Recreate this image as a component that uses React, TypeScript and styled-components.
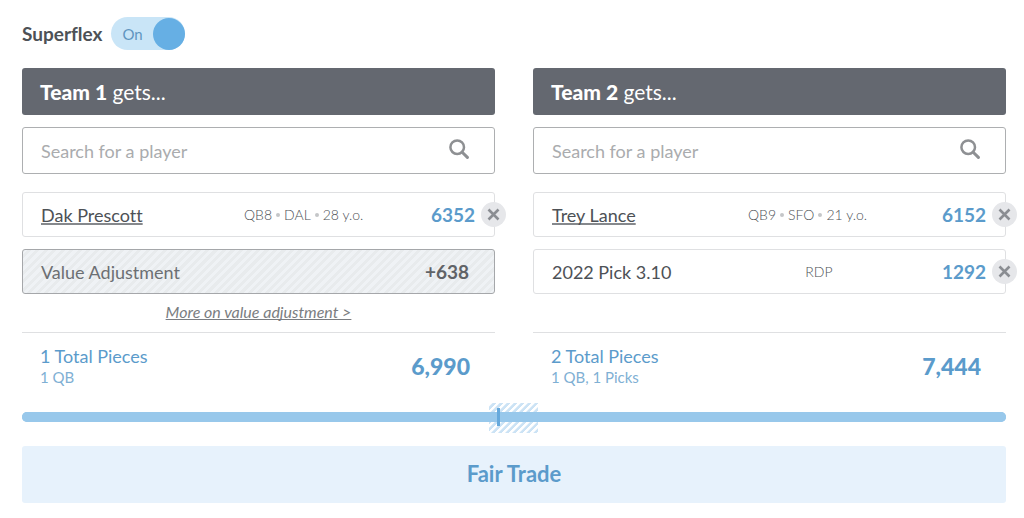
import React, { useState } from "react";
import styled, { createGlobalStyle, css } from "styled-components";

const GlobalStyle = createGlobalStyle`
  *, *::before, *::after { box-sizing: border-box; }
  body {
    margin: 0;
    background: #fff;
    color: #4d5156;
    font-family: Lato, "Open Sans", sans-serif;
    font-size: 18px;
    line-height: 24px;
    font-variant-ligatures: none;
  }
  button, input { font: inherit; color: inherit; }
`;

const Page = styled.main`
  padding: 17px 18px 16px 22px;
`;

const SwitchLabel = styled.label`
  display: inline-flex;
  align-items: center;
  gap: 9px;
  font-size: 19px;
  font-weight: 700;
  cursor: pointer;
`;

const Track = styled.span<{ $on: boolean }>`
  position: relative;
  display: flex;
  align-items: center;
  justify-content: ${(p) => (p.$on ? "space-between" : "flex-end")};
  flex-direction: ${(p) => (p.$on ? "row" : "row-reverse")};
  width: 74px;
  height: 33px;
  padding-left: 11px;
  border-radius: 17px;
  background: #c9e5f7;
  color: #5f95c0;
  font-size: 15px;
  font-weight: 400;
`;

const SwitchInput = styled.input`
  position: absolute;
  inset: 0;
  width: 100%;
  height: 100%;
  margin: 0;
  opacity: 0;
  cursor: pointer;
`;

const Knob = styled.span`
  width: 32px;
  height: 32px;
  border-radius: 50%;
  background: #66afe4;
`;

const Teams = styled.div`
  display: grid;
  grid-template-columns: 1fr 1fr;
  column-gap: 38px;
  margin-top: 18px;
`;

const Team = styled.section`
  display: flex;
  flex-direction: column;
`;

const TeamHeader = styled.h2`
  margin: 0 0 12px;
  padding: 12px 18px 11px;
  border-radius: 3px;
  background: #646870;
  color: #fff;
  font-size: 21px;
  font-weight: 400;
  line-height: 24px;

  strong {
    font-weight: 900;
  }
`;

const SearchBox = styled.div`
  display: flex;
  align-items: center;
  height: 47px;
  margin-bottom: 18px;
  padding: 0 25px 0 18px;
  border: 1px solid #adafb1;
  border-radius: 3px;
`;

const SearchInput = styled.input`
  flex: 1;
  min-width: 0;
  padding: 0;
  border: 0;
  outline: 0;
  background: none;
  &::placeholder { color: #aaacae; opacity: 1; }
`;

const IconButton = styled.button`
  display: flex;
  padding: 0 0 3px;
  border: 0;
  background: none;
  color: #8e9093;
  cursor: pointer;
`;

const Rows = styled.ul`
  display: grid;
  gap: 12px;
  margin: 0;
  padding: 0;
  list-style: none;
`;

const Row = styled.li<{ $adjustment?: boolean }>`
  position: relative;
  display: flex;
  align-items: center;
  height: 45px;
  padding: 0 19px 0 18px;
  border: 1px solid #dfe0e2;
  border-radius: 3px;
  ${(p) =>
    p.$adjustment &&
    css`
      padding-right: 25px;
      border-color: #a5a7aa;
      color: #6c6f73;
      background: repeating-linear-gradient(135deg, #eff2f5 0 3px, #e8ebed 3px 6px);
    `}
`;

const Name = styled.span`
  flex: 3 1 auto;
`;

const PlayerLink = styled.a`
  color: inherit;
  text-decoration-thickness: 2px;
  text-decoration-color: #85888c;
  text-underline-offset: 1px;
  text-decoration-skip-ink: none;
`;

const Meta = styled.span<{ $pick?: boolean }>`
  display: flex;
  align-items: center;
  gap: 4px;
  padding-right: ${(p) => (p.$pick ? "20px" : "0")};
  color: #4d5156;
  font-size: 14px;
  font-weight: 300;
`;

const Dot = styled.span`
  width: 4px;
  height: 4px;
  border-radius: 50%;
  background: #c4c6c8;
`;

const Value = styled.span<{ $muted?: boolean }>`
  flex: 2 1 auto;
  color: ${(p) => (p.$muted ? "#606367" : "#5b9bcb")};
  font-size: 19px;
  font-weight: 700;
  text-align: right;
`;

const RemoveButton = styled.button`
  position: absolute;
  top: 9px;
  right: -12px;
  display: flex;
  align-items: center;
  justify-content: center;
  width: 25px;
  height: 25px;
  padding: 0;
  border: 0;
  border-radius: 50%;
  background: #e6e7ea;
  color: #8a8d92;
  cursor: pointer;
`;

const MoreLink = styled.a`
  align-self: center;
  margin-top: 8px;
  color: #7a7d81;
  font-size: 16px;
  font-style: italic;
  line-height: 20px;
  text-underline-offset: 1px;
  text-decoration-skip-ink: none;
`;

const Totals = styled.div`
  display: flex;
  align-items: center;
  justify-content: space-between;
  margin-top: auto;
  padding: 12px 25px 0 18px;
  border-top: 1px solid #dfe0e2;
  color: #5b9bcb;
`;

const TeamBody = styled.div`
  display: flex;
  flex-direction: column;
  flex: 1;
  padding-bottom: 10px;
`;

const Pieces = styled.p`
  margin: 0;
  line-height: 22px;
`;

const Breakdown = styled.p`
  margin: 0;
  color: #7fb0d4;
  font-size: 15px;
  line-height: 20px;
`;

const Total = styled.strong`
  font-size: 23px;
  font-weight: 900;
`;

const Meter = styled.div`
  position: relative;
  height: 10px;
  margin: 25px 0 24px;
  border-radius: 5px;
  background: #98c8eb;
`;

const FairZone = styled.div`
  position: absolute;
  top: -9px;
  left: 50%;
  width: 49px;
  height: 30px;
  margin-left: -25px;
  background: repeating-linear-gradient(135deg, transparent 0 2px, #cce3f5 3px 5px);
`;

const MeterFill = styled.div`
  position: absolute;
  inset: 0;
  border-radius: 5px;
  background: #98c8eb;
`;

const Marker = styled.div`
  position: absolute;
  top: -4px;
  width: 3px;
  height: 18px;
  background: #66a9dc;
`;

const Verdict = styled.output`
  display: block;
  padding: 16px 16px 17px;
  border-radius: 3px;
  background: #e7f2fc;
  color: #5b9bcb;
  font-size: 22px;
  font-weight: 700;
  text-align: center;
`;

const SearchIcon = () => (
  <svg width="20" height="20" viewBox="0 0 20 20" fill="none" stroke="currentColor" aria-hidden="true">
    <circle cx="8.2" cy="8.2" r="6.8" strokeWidth="2.5" />
    <path d="M13.2 13.2L18.4 18.4" strokeWidth="3" strokeLinecap="round" />
  </svg>
);

const CloseIcon = () => (
  <svg width="13" height="13" viewBox="0 0 13 13" fill="none" stroke="currentColor" aria-hidden="true">
    <path d="M1.5 1.5L11.5 11.5M11.5 1.5L1.5 11.5" strokeWidth="2.6" />
  </svg>
);

type Asset = { name: string; link?: boolean; meta: string[]; value: string };
type Side = {
  title: string;
  assets: Asset[];
  adjustment?: string;
  pieces: string;
  breakdown: string;
  total: string;
};

const sides: Side[] = [
  {
    title: "Team 1",
    assets: [{ name: "Dak Prescott", link: true, meta: ["QB8", "DAL", "28 y.o."], value: "6352" }],
    adjustment: "+638",
    pieces: "1 Total Pieces",
    breakdown: "1 QB",
    total: "6,990",
  },
  {
    title: "Team 2",
    assets: [
      { name: "Trey Lance", link: true, meta: ["QB9", "SFO", "21 y.o."], value: "6152" },
      { name: "2022 Pick 3.10", meta: ["RDP"], value: "1292" },
    ],
    pieces: "2 Total Pieces",
    breakdown: "1 QB, 1 Picks",
    total: "7,444",
  },
];

const AssetRow = ({ asset }: { asset: Asset }) => (
  <Row>
    <Name>{asset.link ? <PlayerLink href="#player">{asset.name}</PlayerLink> : asset.name}</Name>
    <Meta $pick={asset.meta.length === 1}>
      {asset.meta.map((item, i) => (
        <React.Fragment key={item}>
          {i > 0 && <Dot />}
          <span>{item}</span>
        </React.Fragment>
      ))}
    </Meta>
    <Value>{asset.value}</Value>
    <RemoveButton type="button" aria-label={`Remove ${asset.name}`}>
      <CloseIcon />
    </RemoveButton>
  </Row>
);

const TeamPanel = ({ side }: { side: Side }) => (
  <Team>
    <TeamHeader>
      <strong>{side.title}</strong> gets...
    </TeamHeader>
    <SearchBox>
      <SearchInput type="text" placeholder="Search for a player" aria-label={`Search for a player, ${side.title}`} />
      <IconButton type="button" aria-label="Search">
        <SearchIcon />
      </IconButton>
    </SearchBox>
    <TeamBody>
      <Rows>
        {side.assets.map((asset) => (
          <AssetRow key={asset.name} asset={asset} />
        ))}
        {side.adjustment && (
          <Row $adjustment>
            <Name>Value Adjustment</Name>
            <Value $muted>{side.adjustment}</Value>
          </Row>
        )}
      </Rows>
      {side.adjustment && <MoreLink href="#value-adjustment">More on value adjustment &gt;</MoreLink>}
    </TeamBody>
    <Totals>
      <div>
        <Pieces>{side.pieces}</Pieces>
        <Breakdown>{side.breakdown}</Breakdown>
      </div>
      <Total>{side.total}</Total>
    </Totals>
  </Team>
);

export default function App() {
  const [superflex, setSuperflex] = useState(true);
  return (
    <>
      <GlobalStyle />
      <Page>
        <SwitchLabel>
          Superflex
          <Track $on={superflex}>
            {superflex ? "On" : "Off"}
            <Knob />
            <SwitchInput
              type="checkbox"
              role="switch"
              aria-label="Superflex"
              checked={superflex}
              onChange={(e) => setSuperflex(e.target.checked)}
            />
          </Track>
        </SwitchLabel>
        <Teams>
          {sides.map((side) => (
            <TeamPanel key={side.title} side={side} />
          ))}
        </Teams>
        <Meter>
          <FairZone />
          <MeterFill />
          <Marker style={{ left: "48.3%" }} />
        </Meter>
        <Verdict>Fair Trade</Verdict>
      </Page>
    </>
  );
}
